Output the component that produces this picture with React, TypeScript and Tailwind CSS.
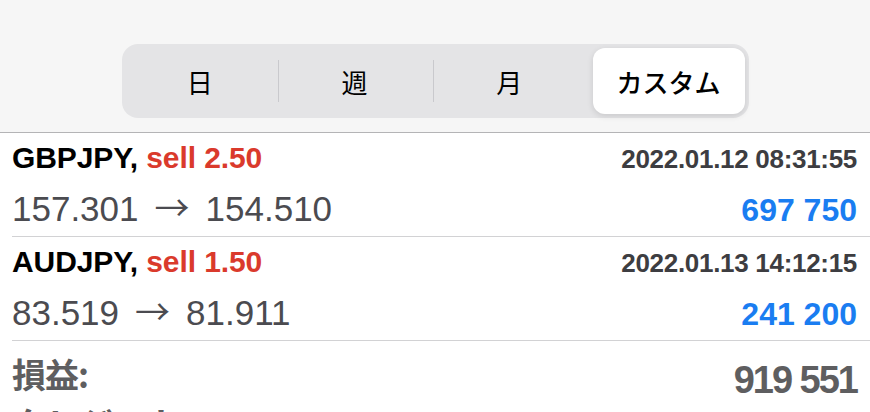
import React from "react";

const latin = "font-['Liberation_Sans','Noto_Sans_CJK_JP',sans-serif]";
const cjk = "font-['Noto_Sans_CJK_JP',sans-serif]";

const tabs = ["日", "週", "月", "カスタム"];

const deals = [
  { symbol: "GBPJPY", side: "sell 2.50", time: "2022.01.12 08:31:55", open: "157.301", close: "154.510", profit: "697 750" },
  { symbol: "AUDJPY", side: "sell 1.50", time: "2022.01.13 14:12:15", open: "83.519", close: "81.911", profit: "241 200" },
];

const Segmented = () => {
  const active = 3;
  return (
    <div className="flex w-[627px] h-[74px] rounded-[16px] bg-[#e4e4e6] p-[4px]">
      {tabs.map((t, i) => (
        <div key={t} className="flex-1 flex items-center relative">
          {i > 0 && i !== active && i - 1 !== active && (
            <div className="absolute -left-[2px] top-[12px] h-[42px] w-px bg-[#c9c9cd]" />
          )}
          <div
            className={`flex-1 h-full flex items-center justify-center ${cjk} text-[26px] text-black ${
              i === active ? "bg-white rounded-[12px] shadow-[0_2px_6px_rgba(0,0,0,0.12)] font-medium ml-[3px]" : "pr-[6px]"
            }`}
          >
            {t}
          </div>
        </div>
      ))}
    </div>
  );
};

const DealRow = ({ d }: { d: (typeof deals)[number] }) => (
  <div className="ml-[12px] pr-[13px] pt-[8px] pb-[8px] border-b border-[#d2d2d4]">
    <div className={`flex h-[34px] items-baseline justify-between ${latin} font-bold leading-[34px]`}>
      <div className="text-[30px] tracking-[-0.1px] text-black">
        {d.symbol}, <span className="text-[#da3a2c]">{d.side}</span>
      </div>
      <div className="text-[26px] tracking-[-0.3px] text-[#3d3d41]">{d.time}</div>
    </div>
    <div className={`flex h-[40px] items-baseline justify-between ${latin} mt-[13px] leading-[40px]`}>
      <div className="text-[35px] text-[#4b4b50]">
        {d.open}
        <span className={`${cjk} text-[35px] leading-none mx-[16px]`}>→</span>
        {d.close}
      </div>
      <div className="text-[32px] font-bold text-[#1a7df1]">{d.profit}</div>
    </div>
  </div>
);

export default function App() {
  return (
    <div className="w-[870px] h-[412px] overflow-hidden bg-white">
      <div className="h-[133px] bg-[#f6f6f6] border-b border-[#b4b4b6] flex justify-center pt-[44px]">
        <Segmented />
      </div>
      {deals.map((d) => (
        <DealRow key={d.symbol} d={d} />
      ))}
      <div className="ml-[12px] pr-[13px] pt-[17px]">
        <div className="flex h-[44px] items-start justify-between font-bold text-[#5e5e60]">
          <div className={`${cjk} text-[34px] leading-[32px] tracking-[-1px]`}>損益:</div>
          <div className={`${latin} text-[38px] leading-[44px] tracking-[-2px]`}>919 551</div>
        </div>
        <div className={`${cjk} font-bold text-[#5e5e60] text-[34px] leading-[40px] mt-[1px]`}>クレジット:</div>
      </div>
    </div>
  );
}
